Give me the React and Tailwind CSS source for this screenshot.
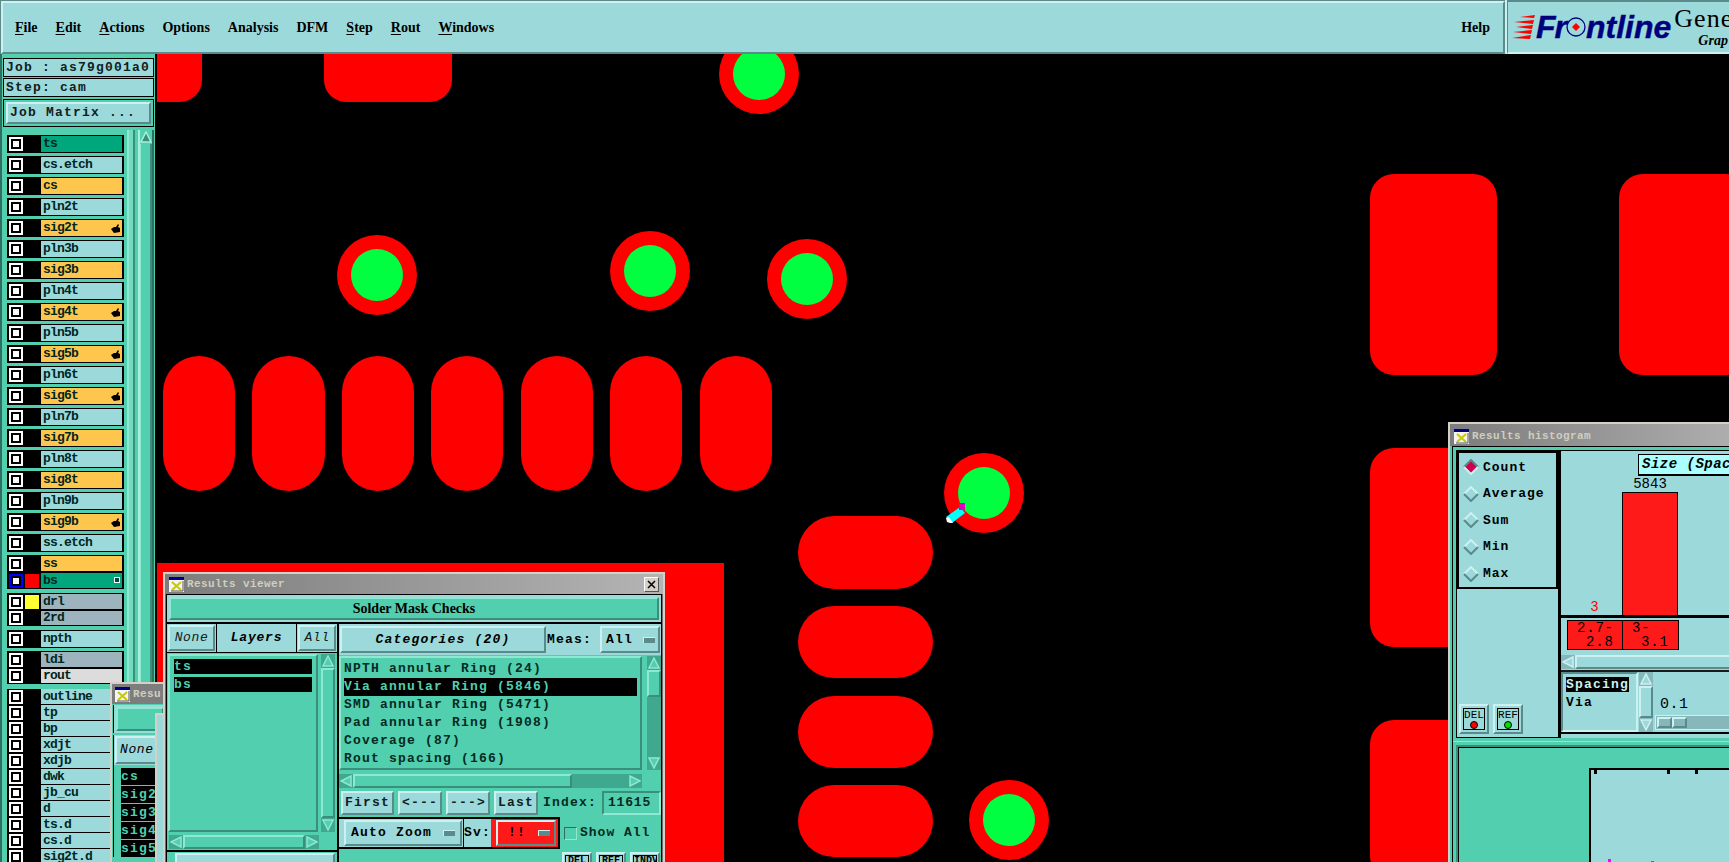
const CANVAS_X = 155;
const CANVAS_Y = 54;

// bevels, X/Motif style
const raised = "border-2 border-t-[#cdf1f1] border-l-[#cdf1f1] border-r-[#5a8a8a] border-b-[#5a8a8a]";
const tealRaised = "border-2 border-t-[#8fe8d0] border-l-[#8fe8d0] border-r-[#3a8f7a] border-b-[#3a8f7a]";
const mono = "font-['Liberation_Mono',monospace] font-bold text-[13px] tracking-[1.2px] whitespace-nowrap";
const serif = "font-['Liberation_Serif',serif] font-bold text-[14px] text-black whitespace-nowrap";

const menus = [
  { label: "File", mark: true },
  { label: "Edit", mark: true },
  { label: "Actions", mark: true },
  { label: "Options" },
  { label: "Analysis" },
  { label: "DFM" },
  { label: "Step", mark: true },
  { label: "Rout", mark: true },
  { label: "Windows", mark: true },
];

const ORANGE = "bg-[#ffc64d]";
const LIGHT = "bg-[#9cd9da]";
const GREEN = "bg-[#00a67c]";

const mainLayers = [
  { name: "ts", bg: GREEN },
  { name: "cs.etch", bg: LIGHT },
  { name: "cs", bg: ORANGE },
  { name: "pln2t", bg: LIGHT },
  { name: "sig2t", bg: ORANGE, hand: true },
  { name: "pln3b", bg: LIGHT },
  { name: "sig3b", bg: ORANGE },
  { name: "pln4t", bg: LIGHT },
  { name: "sig4t", bg: ORANGE, hand: true },
  { name: "pln5b", bg: LIGHT },
  { name: "sig5b", bg: ORANGE, hand: true },
  { name: "pln6t", bg: LIGHT },
  { name: "sig6t", bg: ORANGE, hand: true },
  { name: "pln7b", bg: LIGHT },
  { name: "sig7b", bg: ORANGE },
  { name: "pln8t", bg: LIGHT },
  { name: "sig8t", bg: ORANGE },
  { name: "pln9b", bg: LIGHT },
  { name: "sig9b", bg: ORANGE, hand: true },
  { name: "ss.etch", bg: LIGHT },
];

const otherLayers = ["outline", "tp", "bp", "xdjt", "xdjb", "dwk", "jb_cu", "d", "ts.d", "cs.d", "sig2t.d"];

const vias = [
  [759, 74], [377, 275], [649.5, 271], [807, 279], [984, 493], [1009, 820],
];

const rects = [
  { x: 157, y: 54, w: 45, h: 48, cls: "rounded-br-[22px]" },
  { x: 324, y: 54, w: 128, h: 48, cls: "rounded-b-[22px]" },
  { x: 163, y: 356, w: 72, h: 135, cls: "rounded-full" },
  { x: 252, y: 356, w: 73, h: 135, cls: "rounded-full" },
  { x: 342, y: 356, w: 72, h: 135, cls: "rounded-full" },
  { x: 431, y: 356, w: 72, h: 135, cls: "rounded-full" },
  { x: 521, y: 356, w: 72, h: 135, cls: "rounded-full" },
  { x: 610, y: 356, w: 72, h: 135, cls: "rounded-full" },
  { x: 700, y: 356, w: 72, h: 135, cls: "rounded-full" },
  { x: 798, y: 516, w: 135, h: 73, cls: "rounded-full" },
  { x: 798, y: 606, w: 135, h: 72, cls: "rounded-full" },
  { x: 798, y: 696, w: 135, h: 72, cls: "rounded-full" },
  { x: 798, y: 785, w: 135, h: 72, cls: "rounded-full" },
  { x: 1370, y: 174, w: 127, h: 201, cls: "rounded-[24px]" },
  { x: 1619, y: 174, w: 130, h: 201, cls: "rounded-[24px]" },
  { x: 1370, y: 448, w: 127, h: 199, cls: "rounded-[24px]" },
  { x: 1370, y: 720, w: 127, h: 160, cls: "rounded-[24px]" },
  { x: 157, y: 563, w: 567, h: 299, cls: "" },
];

function CheckBox({ blue }) {
  return (
    <div className={`w-[14px] h-[14px] border-2 bg-black flex items-center justify-center shrink-0 ${blue ? "border-[#0000ff]" : "border-white"}`}>
      <div className="w-[6px] h-[6px] bg-white" />
    </div>
  );
}

function HandMark() {
  return (
    <svg width="9" height="9" viewBox="0 0 9 9" className="absolute right-[2px] top-[4px]">
      <path d="M0 5 L3 3 L5 3 L7 0 L8 1 L7 3 L9 4 L9 8 L3 9 Z" fill="#000" />
    </svg>
  );
}

function LayerRow({ name, bg, hand, swatch, blue, grid, h = "h-[18px]", py = "py-[1px]" }) {
  return (
    <div className={`flex items-center bg-black ${py} pl-[2px] pr-[2px] ${h}`}>
      <CheckBox blue={blue} />
      <div className={`w-[14px] h-[14px] ml-[2px] mr-[2px] shrink-0 ${swatch || "bg-black"}`} />
      <div className={`relative flex-1 h-full pl-[2px] flex items-center text-[#00261f] font-['Liberation_Mono',monospace] font-bold text-[13px] tracking-[-0.8px] ${bg}`}>
        {name}
        {hand && <HandMark />}
        {grid && <div className="absolute right-[2px] top-[4px] w-[6px] h-[6px] border border-white bg-[#004a3a]" />}
      </div>
    </div>
  );
}

function Sidebar() {
  return (
    <aside className="w-[155px] shrink-0 flex bg-[#52cfae] overflow-hidden">
      <div className="w-[2px] bg-[#2f6f60] shrink-0" />
      <div className="flex-1 flex flex-col min-w-0">
        {/* job info */}
        <div className="pl-[1px] pr-[1px] pt-[4px]">
          <div className={`h-[19px] border border-black px-[2px] flex items-center ${LIGHT} ${mono} tracking-[1.2px] text-[#10201d]`}>Job : as79g001a0</div>
          <div className={`h-[19px] mt-[1px] border border-black px-[2px] flex items-center ${LIGHT} ${mono} text-[#10201d]`}>Step: cam</div>
          <div className="mt-[2px] h-[28px] border border-black p-[2px]">
            <div className={`h-full ${LIGHT} ${raised} px-[2px] flex items-center ${mono} text-[#10201d]`}>Job Matrix ...</div>
          </div>
        </div>
        <div className="flex flex-1 mt-[3px] min-h-0">
          {/* layer list */}
          <div className="w-[117px] shrink-0 ml-[5px] mt-[5px] flex flex-col">
            <div className="flex flex-col gap-[3px]">
              {mainLayers.map((l) => (
                <LayerRow key={l.name} {...l} />
              ))}
            </div>
            <div className="mt-[3px] bg-black h-[34px] flex flex-col">
              <LayerRow name="ss" bg={ORANGE} h="h-[17px]" />
              <LayerRow name="bs" bg={GREEN} swatch="bg-[#ff0000]" blue grid h="h-[17px]" />
            </div>
            <div className="mt-[4px] bg-black h-[33px] flex flex-col">
              <LayerRow name="drl" bg="bg-[#9db4bf]" swatch="bg-[#ffff33]" h="h-[17px]" />
              <LayerRow name="2rd" bg="bg-[#9db4bf]" h="h-[16px]" />
            </div>
            <div className="mt-[4px]">
              <LayerRow name="npth" bg={LIGHT} />
            </div>
            <div className="mt-[3px] bg-black h-[33px] flex flex-col">
              <LayerRow name="ldi" bg="bg-[#9db4bf]" h="h-[17px]" />
              <LayerRow name="rout" bg="bg-[#dcdcdc]" h="h-[16px]" />
            </div>
            <div className="mt-[5px] flex flex-col">
              {otherLayers.map((n) => (
                <LayerRow key={n} name={n} bg={LIGHT} h="h-[16px]" py="pt-[0px] pb-[1px]" />
              ))}
            </div>
          </div>
          {/* scroll column */}
          <div className="flex ml-[3px] flex-1">
            <div className="w-[2px] bg-[#8fe8d0]" />
            <div className="w-[4px] bg-[#6fdcc0]" />
            <div className="w-[2px] bg-[#3a8f7a]" />
            <div className="w-[3px] bg-[#52cfae]" />
            <div className="w-[14px] flex flex-col border-l-2 border-[#a8f0dc] bg-[#52cfae]">
              <div className="h-[14px] flex items-center justify-center">
                <Arrow dir="up" light="#a8f0dc" dark="#3a8f7a" />
              </div>
              <div className="flex-1 border-l border-r-2 border-l-[#8fe8d0] border-r-[#3a8f7a]" />
            </div>
            <div className="w-[2px] bg-[#2f6f60]" />
          </div>
        </div>
      </div>
    </aside>
  );
}

function Arrow({ dir, light, dark, size = 12 }) {
  const pts = {
    up: "6,1 11,11 1,11",
    down: "6,11 1,1 11,1",
    left: "1,6 11,1 11,11",
    right: "11,6 1,1 1,11",
  };
  return (
    <svg width={size} height={size} viewBox="0 0 12 12">
      <polygon points={pts[dir]} fill={dark} stroke={light} strokeWidth="1.5" />
    </svg>
  );
}

function VScroll({ light, className = "", thumbH }) {
  const a = light ? "#cdf1f1" : "#8fe8d0";
  const thumbCls = light ? raised + " bg-[#9cd9da]" : tealRaised + " bg-[#52cfae]";
  return (
    <div className={`w-[14px] flex flex-col shrink-0 ${light ? "bg-[#86b8bb]" : "bg-[#3fa88f]"} ${className}`}>
      <div className="h-[14px] flex items-center justify-center">
        <Arrow dir="up" light={a} dark={light ? "#9cd9da" : "#52cfae"} />
      </div>
      {thumbH ? (
        <>
          <div className={`${thumbH} ${thumbCls}`} />
          <div className="flex-1" />
        </>
      ) : (
        <div className={`flex-1 ${thumbCls}`} />
      )}
      <div className="h-[14px] flex items-center justify-center">
        <Arrow dir="down" light={a} dark={light ? "#9cd9da" : "#52cfae"} />
      </div>
    </div>
  );
}

function HScroll({ thumb, light, className = "" }) {
  return (
    <div className={`h-[14px] flex items-center ${light ? "bg-[#86b8bb]" : "bg-[#3fa88f]"} ${className}`}>
      <div className="w-[14px] h-[14px] flex items-center justify-center shrink-0">
        <Arrow dir="left" light={light ? "#cdf1f1" : "#8fe8d0"} dark={light ? "#9cd9da" : "#52cfae"} />
      </div>
      <div className={`h-[14px] ${thumb} ${light ? raised + " bg-[#9cd9da]" : tealRaised + " bg-[#52cfae]"}`} />
      <div className="flex-1" />
      <div className="w-[14px] h-[14px] flex items-center justify-center shrink-0">
        <Arrow dir="right" light={light ? "#cdf1f1" : "#8fe8d0"} dark={light ? "#9cd9da" : "#52cfae"} />
      </div>
    </div>
  );
}

function WinIcon() {
  return (
    <svg width="15" height="15" viewBox="0 0 15 15" className="shrink-0">
      <rect width="15" height="15" fill="#f4f4f4" />
      <rect x="0" y="0" width="15" height="3" fill="#000080" />
      <path d="M3 5 L12 13 M12 5 L3 13" stroke="#c8c800" strokeWidth="2" />
      <path d="M2 14 L14 14 M14 4 L14 14" stroke="#555" strokeWidth="1" />
    </svg>
  );
}

function TitleBar({ text, close, className = "h-[20px] pt-[1px]" }) {
  return (
    <div className={`shrink-0 flex items-center pl-[4px] pr-[4px] bg-gradient-to-r from-[#7d7d7d] to-[#b4b4b4] ${className}`}>
      <WinIcon />
      <span className="ml-[3px] font-['Liberation_Mono',monospace] font-bold text-[11px] tracking-[0.4px] text-[#cfcfbf] whitespace-nowrap">{text}</span>
      {close && (
        <div className="ml-auto w-[15px] h-[15px] bg-[#d4d0c8] border border-t-white border-l-white border-r-[#555] border-b-[#555] flex items-center justify-center">
          <svg width="9" height="9" viewBox="0 0 9 9">
            <path d="M1 1 L8 8 M8 1 L1 8" stroke="#000" strokeWidth="1.5" />
          </svg>
        </div>
      )}
    </div>
  );
}

function Btn({ children, className = "" }) {
  return (
    <div className={`${LIGHT} ${raised} flex items-center justify-center ${mono} text-[#10201d] ${className}`}>{children}</div>
  );
}

function DropMark() {
  return <div className="w-[12px] h-[6px] bg-[#5a8a8a] border-t border-l border-[#cdf1f1] shrink-0" />;
}

function ResultsViewer() {
  const categories = [
    "NPTH annular Ring (24)",
    "Via annular Ring (5846)",
    "SMD annular Ring (5471)",
    "Pad annular Ring (1908)",
    "Coverage (87)",
    "Rout spacing (166)",
  ];
  return (
    <div className="absolute left-[163px] top-[572px] w-[502px] h-[300px] flex flex-col border-2 border-[#d4d0c8] bg-[#6e6e6e] z-20">
      <TitleBar text="Results viewer" close />
      <div className="mx-[1px] flex-1 flex flex-col bg-[#52cfae] border border-black">
        <div className={`h-[27px] p-[2px] ${LIGHT}`}>
          <div className={`h-full bg-[#52cfae] ${tealRaised} flex items-center justify-center ${serif}`}>Solder Mask Checks</div>
        </div>
        <div className="h-[2px] bg-black" />
        <div className="flex flex-1">
          {/* layers side */}
          <div className="w-[170px] shrink-0 flex flex-col">
            <div className="h-[29px] flex items-stretch gap-[1px] bg-black pb-[1px]">
              <div className={`w-[49px] ${LIGHT} p-[1px]`}>
                <div className={`h-full ${raised} flex items-center justify-center font-['Liberation_Mono',monospace] italic text-[13px] tracking-[0.6px] text-[#10201d]`}>None</div>
              </div>
              <div className={`flex-1 ${LIGHT} flex items-center justify-center font-['Liberation_Mono',monospace] italic font-bold text-[13px] tracking-[0.8px]`}>Layers</div>
              <div className={`w-[40px] ${LIGHT} p-[1px]`}>
                <div className={`h-full ${raised} flex items-center justify-center font-['Liberation_Mono',monospace] italic text-[13px] tracking-[0.6px] text-[#10201d]`}>All</div>
              </div>
            </div>
            <div className="flex h-[178px] mt-[1px]">
              <div className={`flex-1 ${tealRaised} mx-[1px] px-[4px] pt-[3px] flex flex-col gap-[3px]`}>
                <div className={`h-[15px] bg-black text-[#52cfae] flex items-center ${mono}`}>ts</div>
                <div className={`h-[15px] bg-black text-[#52cfae] flex items-center ${mono}`}>bs</div>
              </div>
              <VScroll className="mx-[2px]" />
            </div>
            <HScroll thumb="w-[122px]" className="mt-[3px] mx-[2px] w-[150px]" />
            <div className="h-[2px] bg-black mt-[1px]" />
            <div className={`mt-[1px] ml-[8px] mr-[2px] h-[30px] ${LIGHT} ${raised}`} />
          </div>
          <div className="w-[2px] bg-black shrink-0" />
          {/* categories side */}
          <div className="flex-1 flex flex-col min-w-0">
            <div className={`h-[31px] flex items-center ${LIGHT} pl-[1px] pr-[1px]`}>
              <div className={`w-[206px] h-[27px] ${LIGHT} ${raised} flex items-center justify-center font-['Liberation_Mono',monospace] italic font-bold text-[13px] tracking-[1.2px]`}>Categories (20)</div>
              <span className={`ml-[1px] ${mono}`}>Meas:</span>
              <div className={`ml-auto w-[60px] h-[27px] ${raised} flex items-center justify-between pl-[4px] pr-[3px] ${mono}`}>
                All
                <DropMark />
              </div>
            </div>
            <div className="flex mt-[1px] h-[114px]">
              <div className={`w-[303px] ${tealRaised} px-[3px] pt-[2px] flex flex-col`}>
                {categories.map((c, i) => (
                  <div key={c} className={`h-[18px] flex items-center ${i === 1 ? "bg-black text-[#52cfae]" : "text-[#052a22]"} ${mono}`}>{c}</div>
                ))}
              </div>
              <VScroll className="ml-[5px]" thumbH="h-[27px]" />
            </div>
            <HScroll thumb="w-[219px]" className="mt-[4px] w-[303px]" />
            <div className="flex items-center h-[24px] mt-[3px] pl-[2px] gap-[4px]">
              <Btn className="w-[53px] h-full">First</Btn>
              <Btn className="w-[44px] h-full">&lt;---</Btn>
              <Btn className="w-[44px] h-full">---&gt;</Btn>
              <Btn className="w-[44px] h-full">Last</Btn>
              <span className={`${mono} ml-[1px] text-[#052a22]`}>Index:</span>
              <div className="ml-[1px] w-[59px] h-full border-2 border-t-[#3a8f7a] border-l-[#3a8f7a] border-r-[#8fe8d0] border-b-[#8fe8d0] flex items-center pl-[4px] font-['Liberation_Mono',monospace] font-bold text-[13px] tracking-[0.8px] text-[#052a22]">11615</div>
            </div>
            <div className="flex items-center h-[32px] mt-[2px]">
              <div className="w-[221px] h-full flex border-2 border-black border-l-0 bg-[#9cd9da]">
                <div className="w-[124px] h-full p-[1px] pl-[5px]">
                  <div className={`h-full ${raised} flex items-center justify-between pl-[5px] pr-[5px] ${mono}`}>
                    Auto Zoom
                    <DropMark />
                  </div>
                </div>
                <div className="w-[1px] bg-black" />
                <div className={`w-[27px] flex items-center ${mono}`}>Sv:</div>
                <div className="flex-1 bg-[#ff1a1a] p-[1px] pl-[5px] pr-[2px]">
                  <div className={`h-full ${raised} flex items-center justify-between pl-[8px] pr-[4px] ${mono}`}>
                    <span className="ml-[2px]">!!</span>
                    <DropMark />
                  </div>
                </div>
              </div>
              <div className="ml-[4px] w-[13px] h-[13px] border border-t-[#2f6f60] border-l-[#2f6f60] border-r-[#8fe8d0] border-b-[#8fe8d0]" />
              <span className={`ml-[3px] ${mono} tracking-[1px] text-[#052a22]`}>Show All</span>
            </div>
            <div className="flex justify-end gap-[4px] mt-[3px] pr-[1px]">
              {["DEL", "REF", "INDV"].map((t) => (
                <div key={t} className={`w-[30px] h-[24px] ${LIGHT} ${raised} p-[1px]`}>
                  <div className="h-full border border-black font-['Liberation_Mono',monospace] font-bold text-[10px] leading-[10px] text-center overflow-hidden">{t}</div>
                </div>
              ))}
            </div>
          </div>
        </div>
      </div>
    </div>
  );
}

function SmallResults() {
  return (
    <div className="absolute left-[110px] top-[682px] w-[56px] h-[200px] border-2 border-[#d4d0c8] border-r-0 bg-[#52cfae] flex flex-col overflow-hidden z-10">
      <div className="h-[20px] pt-[1px] shrink-0 flex items-center pl-[3px] bg-[#7d7d7d] overflow-hidden">
        <WinIcon />
        <span className="ml-[3px] font-['Liberation_Mono',monospace] font-bold text-[11px] tracking-[0.4px] text-[#cfcfbf]">Resu</span>
      </div>
      <div className={`h-[28px] mt-[1px] ml-[1px] p-[2px] ${LIGHT} border-l border-black`}>
        <div className={`h-full bg-[#52cfae] ${tealRaised}`} />
      </div>
      <div className={`h-[30px] ml-[1px] mt-[2px] p-[1px] ${LIGHT} border-l border-black`}>
        <div className={`h-full ${raised} flex items-center pl-[3px] font-['Liberation_Mono',monospace] italic text-[13px] tracking-[0.6px] overflow-hidden`}>None</div>
      </div>
      <div className="flex flex-col gap-[1px] pl-[7px] pt-[3px] border-l border-black ml-[1px]">
        {["cs", "sig2", "sig3", "sig4", "sig5"].map((s) => (
          <div key={s} className={`h-[17px] bg-black text-[#52cfae] flex items-center ${mono} overflow-hidden`}>{s}</div>
        ))}
      </div>
    </div>
  );
}

function Radio({ label, on }) {
  return (
    <div className={`flex items-center h-[27px] pl-[4px] gap-[4px] ${mono} tracking-[1px]`}>
      <svg width="16" height="16" viewBox="0 0 16 16" className="shrink-0">
        <polygon points="8,1 15,8 8,15 1,8" fill={on ? "#d00050" : "#9cd9da"} />
        <path d="M1 8 L8 1 L15 8" fill="none" strokeWidth="2" stroke={on ? "#5a8a8a" : "#cdf1f1"} />
        <path d="M1 8 L8 15 L15 8" fill="none" strokeWidth="2" stroke={on ? "#cdf1f1" : "#5a8a8a"} />
      </svg>
      {label}
    </div>
  );
}

function SquareBtn({ label, dot }) {
  return (
    <div className={`w-[30px] h-[30px] ${raised} p-[2px]`}>
      <div className="h-full border border-black flex flex-col items-center font-['Liberation_Mono',monospace] text-[11px] leading-[11px] pt-[1px]">
        {label}
        <div className={`w-[8px] h-[8px] rounded-full border border-black ${dot}`} />
      </div>
    </div>
  );
}

function ResultsHistogram() {
  return (
    <div className="absolute left-[1448px] top-[422px] w-[320px] h-[460px] border-2 border-[#d4d0c8] bg-[#52cfae] flex flex-col z-20">
      <TitleBar text="Results histogram" className="h-[22px] pt-[3px]" />
      <div className="ml-[2px] flex-1 flex flex-col border border-[#000] border-r-0">
        <div className="h-[294px] flex p-[3px] pr-0 bg-[#52cfae]">
          <div className={`w-[103px] shrink-0 flex flex-col ${LIGHT} border border-black`}>
            <div className="h-[138px] border-2 border-black pt-[1px] flex flex-col">
              <Radio label="Count" on />
              <Radio label="Average" />
              <Radio label="Sum" />
              <Radio label="Min" />
              <Radio label="Max" />
            </div>
            <div className="flex-1" />
            <div className="flex gap-[4px] pl-[2px] pb-[3px]">
              <SquareBtn label="DEL" dot="bg-[#ff0000]" />
              <SquareBtn label="REF" dot="bg-[#00e000]" />
            </div>
          </div>
          <div className="w-[2px] bg-black shrink-0" />
          <div className={`flex-1 flex flex-col ${LIGHT} border-t border-black`}>
            {/* chart */}
            <div className="relative h-[164px] flex items-end pl-[6px]">
              <div className="w-[55px] flex justify-center font-['Liberation_Mono',monospace] text-[14px] text-[#ff0000] leading-[14px] pb-[1px]">3</div>
              <div className="w-[56px] flex flex-col items-center">
                <span className="font-['Liberation_Mono',monospace] text-[14px] leading-[14px] pb-[1px]">5843</span>
                <div className="w-full h-[123px] bg-[#ff1a1a] border border-black border-b-0" />
              </div>
              <div className="absolute left-[77px] top-[3px] w-[170px] h-[22px] bg-[#aaffff] border-t border-l border-black border-b-2 flex items-center pl-[3px] font-['Liberation_Mono',monospace] font-bold italic text-[14px] tracking-[0.5px]">Size (Spacing)</div>
            </div>
            <div className="h-[3px] bg-black" />
            <div className="ml-[6px] mt-[2px] w-[112px] h-[30px] flex bg-[#ff1a1a] border border-black font-['Liberation_Mono',monospace] text-[14px] leading-[14px] tracking-[0.8px]">
              <div className="w-[55px] border-r border-black pl-[9px]">2.7-<br /><span className="pl-[9px]">2.8</span></div>
              <div className="flex-1 pl-[9px]">3-<br /><span className="pl-[9px]">3.1</span></div>
            </div>
            <HScroll light thumb="w-[300px]" className="mt-[5px]" />
            <div className="flex h-[62px] mt-[1px] border-t-2 border-[#1a1a1a]">
              <div className={`w-[77px] shrink-0 border-2 border-t-[#5a8a8a] border-l-[#5a8a8a] border-r-[#cdf1f1] border-b-[#cdf1f1] pl-[3px] pt-[3px] ${mono} tracking-[0.4px]`}>
                <div className="bg-black text-[#cdf1f1] w-fit h-[15px] leading-[15px]">Spacing</div>
                <div className="mt-[3px] h-[15px] leading-[15px]">Via</div>
              </div>
              <VScroll light className="ml-[1px]" />
              <div className="flex-1 pl-[2px] flex flex-col">
                <span className="mt-[25px] ml-[5px] font-['Liberation_Mono',monospace] text-[15px] leading-[15px] tracking-[0.5px]">0.1</span>
                <div className="mt-[3px] h-[15px] bg-[#86b8bb] flex p-[1px] border border-[#cdf1f1]">
                  <div className={`w-[15px] h-full ${raised}`} />
                  <div className={`w-[15px] h-full ${raised}`} />
                </div>
              </div>
            </div>
            <div className="h-[2px] bg-black" />
          </div>
        </div>
        {/* drawing panel */}
        <div className="h-[1px] bg-[#8fe8d0]" />
        <div className="flex-1 mt-[3px] ml-[3px] border-2 border-[#3a8f7a] border-r-0 bg-[#52cfae]">
          <div className="h-full border border-black border-r-0 pl-[130px] pt-[20px]">
            <div className={`relative h-full ${LIGHT} border-t-2 border-l-2 border-black`}>
              <div className="absolute left-[3px] top-0 w-[3px] h-[4px] bg-black" />
              <div className="absolute left-[76px] top-0 w-[3px] h-[4px] bg-black" />
              <div className="absolute left-[104px] top-0 w-[3px] h-[4px] bg-black" />
              <div className="absolute left-[17px] top-[89px] w-[3px] h-[3px] bg-[#ff00ff]" />
              <div className="absolute left-[60px] top-[91px] w-[3px] h-[3px] bg-[#ff00ff]" />
            </div>
          </div>
        </div>
      </div>
    </div>
  );
}

function Logo() {
  return (
    <div className="flex-1 flex items-center overflow-hidden border-t-2 border-l border-b-2 border-t-[#5a8a8a] border-l-[#5a8a8a] border-b-[#cdf1f1] bg-[#9cd9da] pl-[4px]">
      <svg width="24" height="24" viewBox="0 0 24 24" className="shrink-0">
        <path d="M8 2 L23 0 L22 3 Z M2 7 L22 5 L21 9 Z M4 12 L21 10 L20 14 Z M1 17 L20 15 L19 19 Z M0 23 L19 20 L18 24 Z" fill="#ff0000" />
      </svg>
      <div className="flex items-center font-['Liberation_Sans',sans-serif] font-bold italic text-[32px] leading-none text-[#00007f] [-webkit-text-stroke:0.4px_#00007f]">
        <span className="tracking-[-1px]">Fr</span>
        <svg width="20" height="20" viewBox="0 0 20 20" className="shrink-0">
          <circle cx="10" cy="10" r="9" fill="none" stroke="#00007f" strokeWidth="1.3" />
          <polygon points="10,6 14,10 10,14 6,10" fill="#ff0000" />
        </svg>
        <span>ntline</span>
      </div>
      <div className="ml-[3px] flex flex-col font-['Liberation_Serif',serif] text-black">
        <span className="text-[26px] leading-[26px] tracking-[1px]">Gene</span>
        <span className="ml-[24px] mt-[2px] text-[14px] leading-[14px] font-bold italic">Grap</span>
      </div>
    </div>
  );
}

export default function App() {
  return (
    <div className="relative w-[1729px] h-[862px] flex flex-col overflow-hidden bg-black">
      <header className="h-[54px] shrink-0 flex">
        <div className={`w-[1505px] shrink-0 ${LIGHT} border-t border-l border-[#5a8a8a]`}>
          <nav className={`h-full flex items-center ${raised} pl-[12px] pr-[13px] gap-[18px] ${serif}`}>
            {menus.map((m) => (
              <span key={m.label}>
                {m.mark ? <span className="underline underline-offset-2">{m.label[0]}</span> : m.label[0]}
                {m.label.slice(1)}
              </span>
            ))}
            <span className="ml-auto">Help</span>
          </nav>
        </div>
        <div className="w-[2px] bg-[#cdf1f1] shrink-0" />
        <Logo />
      </header>
      <div className="flex-1 flex min-h-0">
        <Sidebar />
        <main className="relative flex-1 bg-black overflow-hidden">
          {rects.map((r) => (
            <div
              key={`${r.x}-${r.y}`}
              className={`absolute bg-[#ff0000] ${r.cls}`}
              style={{ left: r.x - CANVAS_X, top: r.y - CANVAS_Y, width: r.w, height: r.h }}
            />
          ))}
          {vias.map(([x, y]) => (
            <div
              key={x}
              className="absolute w-[80px] h-[80px] rounded-full bg-[#ff0000] flex items-center justify-center"
              style={{ left: x - 40 - CANVAS_X, top: y - 40 - CANVAS_Y }}
            >
              <div className="w-[52px] h-[52px] rounded-full bg-[#00ff40]" />
            </div>
          ))}
          {/* measurement marker on the via */}
          <svg width="24" height="20" viewBox="0 0 24 20" className="absolute left-[791px] top-[449px]">
            <polygon points="0,14 14,4 19,10 6,20" fill="#00ffff" />
            <polygon points="0,15 3,14 7,20 4,20 1,19" fill="#ffffff" />
            <rect x="13" y="0" width="6" height="7" fill="#e000c0" />
          </svg>
        </main>
      </div>
      <SmallResults />
      <div className="absolute left-[155px] top-[713px] w-[9px] h-[150px] bg-[#9cd9da] border-l-2 border-t-2 border-[#d4d0c8] z-10" />
      <ResultsViewer />
      <ResultsHistogram />
    </div>
  );
}
